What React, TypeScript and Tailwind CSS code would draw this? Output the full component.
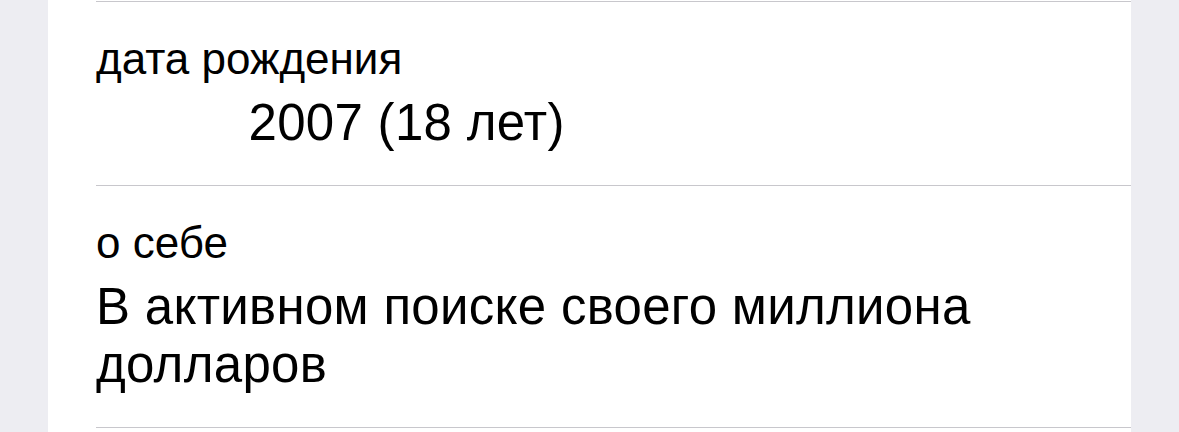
import React from 'react';

type Field = {
    label: string;
    value: React.ReactNode;
};

const fields: Field[] = [
    {
        label: 'дата рождения',
        value: (
            <>
                <span className="inline-block w-[138px]" aria-hidden="true" />
                {' '}2007 (18 лет)
            </>
        ),
    },
    {
        label: 'о себе',
        value: 'В активном поиске своего миллиона долларов',
    },
];

const App: React.FC = () => {
    return (
        <div className="min-h-screen w-full bg-[#ededf2] font-['Liberation_Sans',Arial,sans-serif] text-black">
            <div className="mx-12 bg-white pt-px">
                <div className="ml-12">
                    {fields.map((field) => (
                        <div key={field.label} className="border-t border-[#c8c7cc] pr-12 pt-[31px] pb-[33px]">
                            <div className="text-[44px] leading-[52px]">{field.label}</div>
                            <div className="mt-[9px] max-w-[900px] text-[51px] leading-[58px] tracking-[0.3px]">{field.value}</div>
                        </div>
                    ))}
                    <div className="border-t border-[#c8c7cc] h-2" />
                </div>
            </div>
        </div>
    );
};

export default App;
